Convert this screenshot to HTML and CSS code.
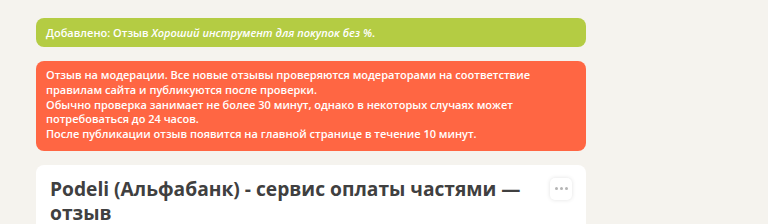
FILE: index.html
```html
<!DOCTYPE html>
<html lang="ru">
<head>
<meta charset="utf-8">
<link rel="stylesheet" href="styles.css">
</head>
<body>
<main class="column">
  <div class="notice notice-success">Добавлено: Отзыв <em>Хороший инструмент для покупок без %</em>.</div>
  <div class="notice notice-warning">Отзыв на модерации. Все новые отзывы проверяются модераторами на соответствие правилам сайта и публикуются после проверки.<br>Обычно проверка занимает не более 30 минут, однако в некоторых случаях может потребоваться до 24 часов.<br>После публикации отзыв появится на главной странице в течение 10 минут.</div>
  <section class="card">
    <div class="card-head">
      <h1 class="title">Podeli (Альфабанк) - сервис оплаты частями — отзыв</h1>
      <button class="more" aria-label="Ещё"><span></span><span></span><span></span></button>
    </div>
  </section>
</main>
</body>
</html>
```
FILE: styles.css
```css
html, body {
  margin: 0;
  padding: 0;
  background: #f5f3ee;
  font-family: "Open Sans", "Noto Sans", sans-serif;
}
.column {
  width: 550px;
  margin-left: 36px;
  padding-top: 18px;
  display: flex;
  flex-direction: column;
  gap: 14px;
}
.notice {
  border-radius: 8px;
  color: #fff;
  font-size: 11px;
  font-weight: 600;
  padding: 7px 10px;
  line-height: 15px;
}
.notice-success {
  background: #b4cc43;
}
.notice-success em {
  font-style: italic;
}
.notice-warning {
  background: #ff6643;
  line-height: 14.75px;
  padding: 7px 10px 9px;
}
.card {
  background: #fff;
  border-radius: 8px 8px 0 0;
  padding: 12px 14px 0 14px;
  height: 60px;
}
.card-head {
  display: flex;
  align-items: flex-start;
  justify-content: space-between;
  gap: 16px;
}
.title {
  margin: 0;
  font-size: 19.2px;
  font-weight: 700;
  line-height: 24px;
  color: #404040;
  width: 485px;
}
.more {
  flex: none;
  width: 22px;
  height: 22px;
  margin-top: 1px;
  border: none;
  border-radius: 5px;
  background: #fff;
  box-shadow: 0 0 4px rgba(0,0,0,0.12);
  display: flex;
  align-items: center;
  justify-content: center;
  gap: 2px;
  padding: 0;
}
.more span {
  width: 3px;
  height: 3px;
  border-radius: 50%;
  background: #b5b5b5;
}
```
